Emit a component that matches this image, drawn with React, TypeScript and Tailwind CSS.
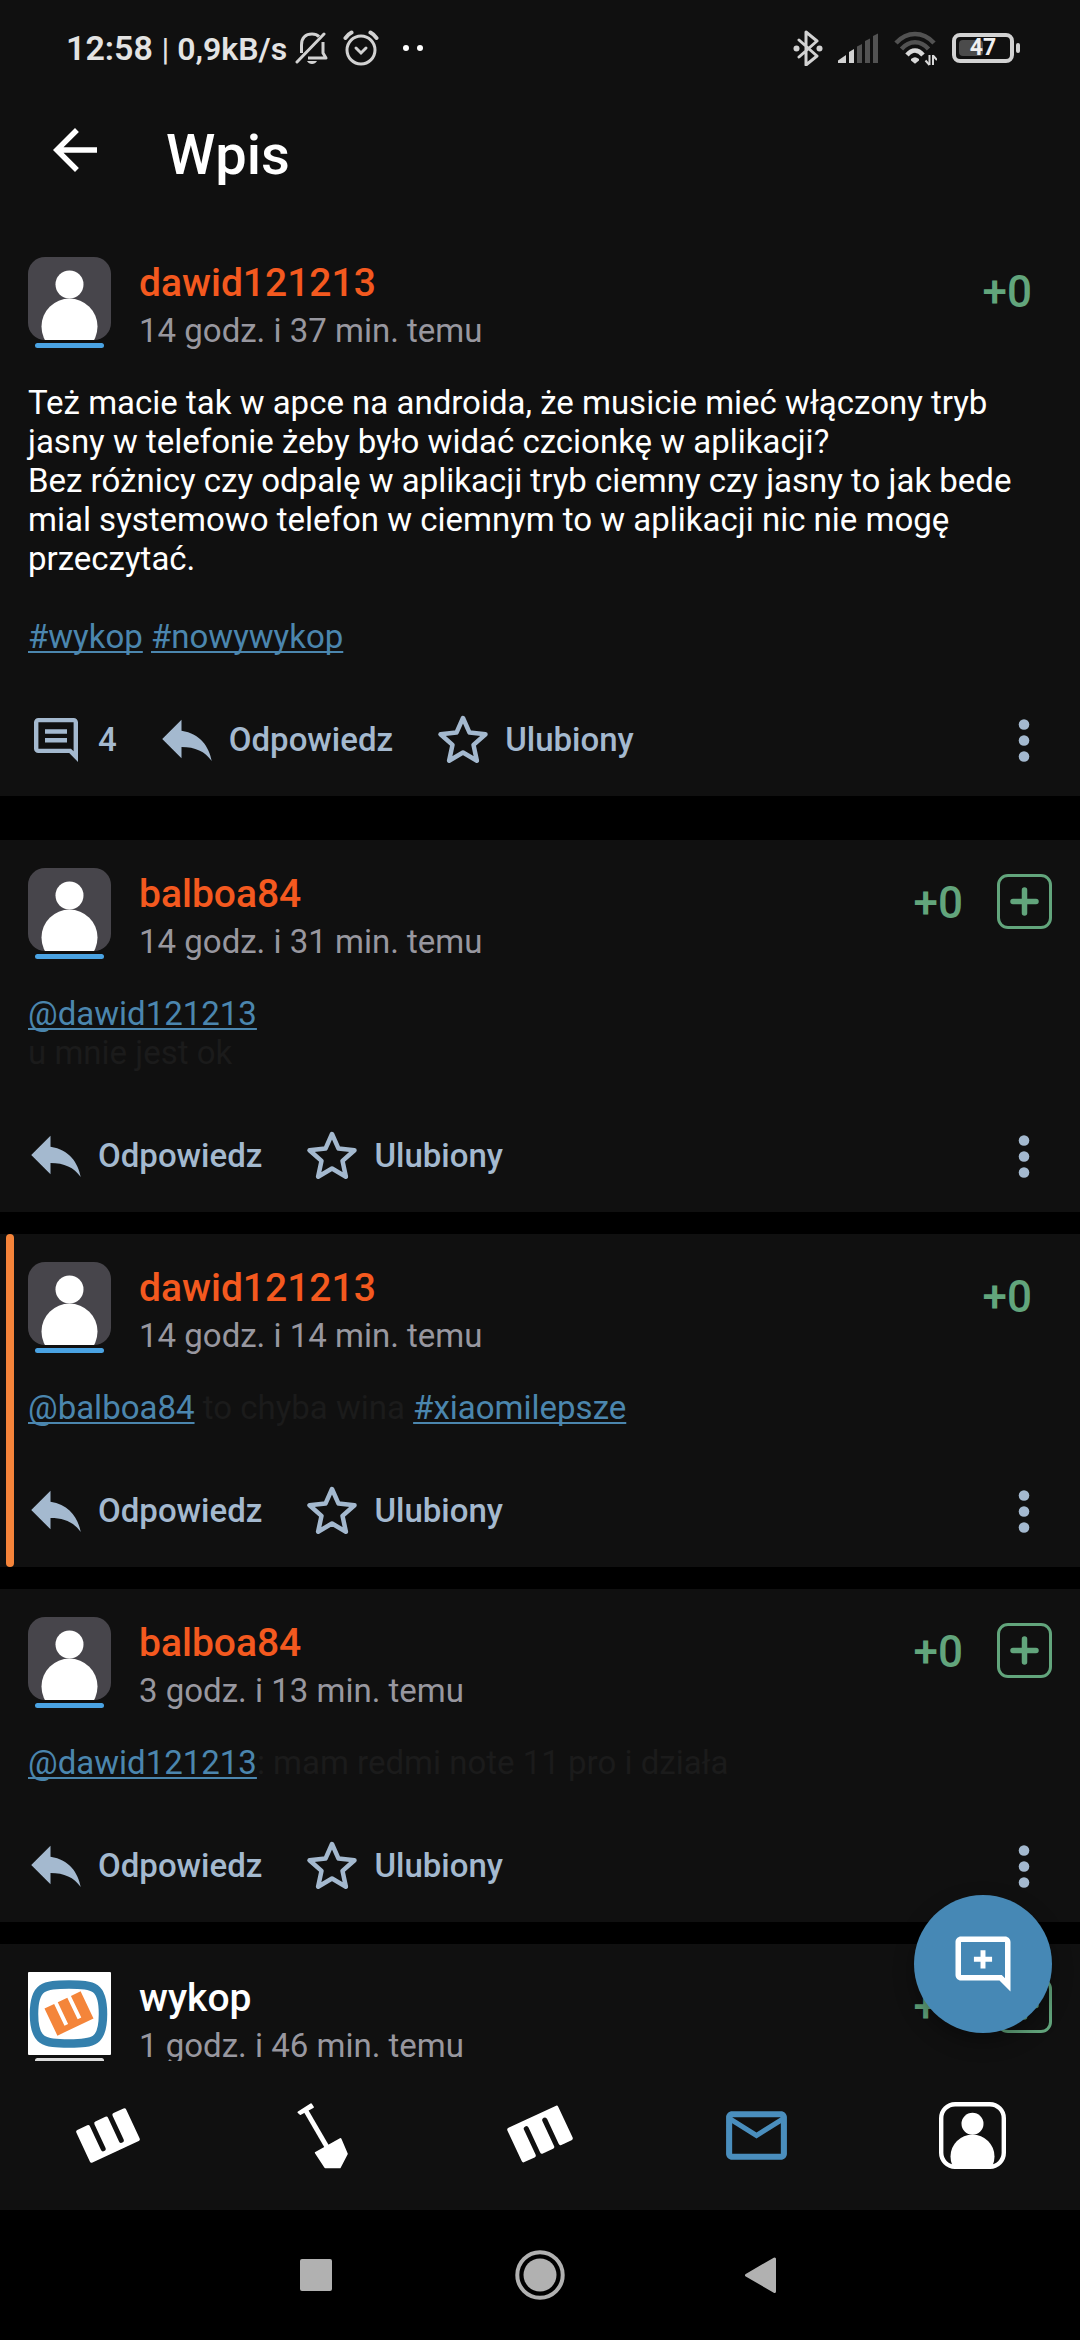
import type { ReactNode } from "react";

type Post = {
  author: string;
  time: string;
  body?: ReactNode;
  official?: boolean;
  highlighted?: boolean;
  canVote?: boolean;
  comments?: number;
};

function Tag({ children }: { children: string }) {
  return (
    <a
      href="#"
      className="text-[#4b86ae] underline decoration-2 underline-offset-[3px] [text-decoration-skip-ink:none]"
    >
      {children}
    </a>
  );
}

function BellOffIcon() {
  return (
    <svg width="34" height="36" viewBox="0 0 34 36" fill="none" stroke="#d2d2d2" strokeWidth="3">
      <path d="M6.5 23V15C6.5 8 10.500 4 17 4c3 0 5.500 1 7 2.600M28 12v11l3 5H13" strokeLinejoin="round" />
      <path d="M2 32 29 4" strokeLinecap="round" />
      <path d="M12 31h10c-1 2-3 3-5 3s-4-1-5-3Z" fill="#d2d2d2" stroke="none" />
    </svg>
  );
}

function AlarmIcon() {
  return (
    <svg width="36" height="36" viewBox="0 0 36 36" fill="none" stroke="#d2d2d2" strokeLinecap="round">
      <circle cx="18" cy="20" r="14" strokeWidth="3" />
      <path d="m13 18 5 5 5-5" strokeWidth="3" />
      <path d="M2.500 8C4 5.500 6 3.800 8.500 2.500M33.500 8C32 5.500 30 3.800 27.500 2.500" strokeWidth="4" />
    </svg>
  );
}

function BluetoothIcon() {
  return (
    <svg width="30" height="36" viewBox="0 0 30 36" fill="#d2d2d2">
      <path
        d="m6 10 18 16-11 9V2l11 9L6 27"
        fill="none"
        stroke="#d2d2d2"
        strokeWidth="3"
        strokeLinejoin="round"
        strokeLinecap="round"
      />
      <circle cx="3.500" cy="18.500" r="3" />
      <circle cx="26.500" cy="18.500" r="3" />
    </svg>
  );
}

function SignalIcon() {
  return (
    <svg width="41" height="30" viewBox="0 0 41 30">
      <path d="M0 30v-2.500L8 22v8Z" fill="#d2d2d2" />
      <path d="M11 30V19l5-3v14Z" fill="#d2d2d2" />
      <path d="M19 30V13.500l5-2.500v19ZM27 30V8l5-2.500V30ZM35 30V3l5-2.500V30Z" fill="#525252" />
    </svg>
  );
}

function WifiIcon() {
  return (
    <svg width="43" height="36" viewBox="0 0 43 36" fill="none" strokeWidth="4.500">
      <path d="M2 13c11-12 27-12 38 0" stroke="#525252" />
      <path d="M7.500 19c8-9 19-9 27 0" stroke="#525252" />
      <path d="M13 25c5-6 11-6 16 0" stroke="#d9d9d9" />
      <path d="M18 29.500q3-2.500 6 0v.5L21 32.500 18 30Z" fill="#d9d9d9" strokeWidth="2" stroke="#d9d9d9" />
      <path d="M35.500 25v10M39 25v10" stroke="#d9d9d9" strokeWidth="2" />
      <path d="m35.500 35-4-4.500M39 25.500l4 4.500" stroke="#d9d9d9" strokeWidth="2" />
    </svg>
  );
}

function Battery({ level }: { level: number }) {
  return (
    <div className="flex items-center gap-0.5">
      <div className="relative flex h-[30px] w-[62px] items-center justify-center rounded-lg border-4 border-[#d2d2d2]">
        <div className="absolute inset-y-[3px] left-[3px] w-6 rounded-sm bg-[#4b4b4b]" />
        <span className="relative text-[23px] leading-6 font-bold text-[#f0f0f0]">{level}</span>
      </div>
      <div className="h-2.5 w-1 rounded-full bg-[#d2d2d2]" />
    </div>
  );
}

function StatusBar() {
  return (
    <div className="flex h-24 items-center justify-between pr-[60px] pl-[66px]">
      <div className="flex items-center gap-3.5">
        <div className="flex items-center gap-2">
          <p className="text-[34px] leading-10 font-semibold text-[#e3e3e3]">
            12:58 <span className="text-[32px]"><span className="font-normal">|</span> 0,9kB/s</span>
          </p>
          <BellOffIcon />
        </div>
        <AlarmIcon />
        <div className="ml-2.5 flex gap-2">
          <div className="size-1.5 rounded-full bg-white" />
          <div className="size-1.5 rounded-full bg-white" />
        </div>
      </div>
      <div className="flex items-center gap-[15px]">
        <BluetoothIcon />
        <SignalIcon />
        <WifiIcon />
        <Battery level={47} />
      </div>
    </div>
  );
}

function UserAvatar() {
  return (
    <svg width="83" height="83" viewBox="0 0 83 83" className="rounded-[17px]">
      <rect width="83" height="83" fill="#47454b" />
      <circle cx="41.500" cy="27.500" r="14" fill="#fff" />
      <circle cx="41.500" cy="69.500" r="28" fill="#fff" />
    </svg>
  );
}

function WykopAvatar() {
  return (
    <svg width="83" height="83" viewBox="0 0 83 83">
      <rect width="83" height="83" rx="1" fill="#fff" />
      <path
        d="M41 12.500C66 12.500 75 14 75 42S66 71.500 41 71.500 6 70 6 42s10-29.500 35-29.500Z"
        fill="none"
        stroke="#3480ad"
        strokeWidth="8.500"
      />
      <path
        transform="translate(41 41.500) rotate(-25.500)"
        d="M-20-15H-9.300V9h4V-15H5.300V9h4V-15H20V15H-20Z"
        fill="#f4853a"
      />
    </svg>
  );
}

function ReplyIcon() {
  return (
    <svg width="66" height="66" viewBox="0 0 24 24" fill="currentColor">
      <path d="M10 9V5l-7 7 7 7v-4.100c5 0 8.500 1.600 11 5.100-1-5-4-10-11-11z" />
    </svg>
  );
}

function StarIcon() {
  return (
    <svg width="66" height="66" viewBox="0 0 66 66" fill="none" stroke="currentColor" strokeWidth="4.500" strokeLinejoin="round">
      <path
        transform="translate(33 35.500)"
        d="M0-23.500 6.500-8.900 22.500-7.300 10.500 3.400 13.900 19.200 0 11-13.900 19.200-10.500 3.400-22.500-7.300-6.500-8.900Z"
      />
    </svg>
  );
}

function CommentIcon() {
  return (
    <svg width="66" height="66" viewBox="-3 -3.400 30 30" fill="currentColor">
      <path d="M22 4c0-1.100-.9-2-2-2H4c-1.100 0-2 .9-2 2v12c0 1.100.9 2 2 2h14l4 4V4zm-2 0v13.170L18.830 16H4V4h16z" />
      <path d="M7 7.200h10v2H7zM7 11.200h10v2H7z" />
    </svg>
  );
}

function DotsIcon() {
  return (
    <svg width="66" height="66" viewBox="0 0 66 66" fill="currentColor">
      <circle cx="33" cy="18.500" r="5.300" />
      <circle cx="33" cy="34.500" r="5.300" />
      <circle cx="33" cy="50.500" r="5.300" />
    </svg>
  );
}

const actionClass = "flex items-center gap-[9px] text-[33px] leading-[39px] font-medium";

function PostCard({ post }: { post: Post }) {
  return (
    <article className="relative bg-[#101010] pt-7 pb-6">
      {post.highlighted && <div className="absolute inset-y-0 left-1.5 w-2 rounded-full bg-[#f5843a]" />}
      <header className="flex items-start gap-7 px-7">
        <div className="flex flex-col items-center gap-[3px]">
          {post.official ? <WykopAvatar /> : <UserAvatar />}
          <div
            className={
              post.official
                ? "h-[5px] w-[69px] rounded-full bg-[#dcdcdc]"
                : "h-[5px] w-[69px] rounded-full bg-[#4aa3e3]"
            }
          />
        </div>
        <div className="grow">
          <h2
            className={
              post.official
                ? "text-[39px] leading-[52px] font-medium text-white"
                : "text-[39px] leading-[52px] font-medium text-[#f4591f]"
            }
          >
            {post.author}
          </h2>
          <p className="text-[33px] leading-[44px] text-[#98979f]">{post.time}</p>
        </div>
        <div className={post.canVote ? "flex items-start gap-[34px] pt-1.5" : "flex items-start pt-1.5 pr-5"}>
          <span className="text-[44px] leading-[58px] font-medium text-[#62a57c]">+0</span>
          {post.canVote && (
            <button
              type="button"
              aria-label="Plusuj"
              className="flex size-[55px] items-center justify-center rounded-[11px] border-[3px] border-[#62a57c]"
            >
              <svg width="29" height="29" viewBox="0 0 29 29" stroke="#62a57c" strokeWidth="5.500" strokeLinecap="round">
                <path d="M14.500 3v23M3 14.500h23" />
              </svg>
            </button>
          )}
        </div>
      </header>
      {post.body && (
        <>
          <div className="mt-[30px] px-7 text-[33px] leading-[39px]">{post.body}</div>
          <footer className="mt-[50px] flex items-center justify-between px-[23px] text-[#a4b9cf]">
            <div className="flex items-center gap-[37px]">
              {post.comments !== undefined && (
                <button type="button" aria-label="Komentarze" className={actionClass}>
                  <CommentIcon />
                  {post.comments}
                </button>
              )}
              <button type="button" className={actionClass}>
                <ReplyIcon />
                Odpowiedz
              </button>
              <button type="button" className={actionClass}>
                <StarIcon />
                Ulubiony
              </button>
            </div>
            <button type="button" aria-label="Więcej">
              <DotsIcon />
            </button>
          </footer>
        </>
      )}
    </article>
  );
}

const mainPost: Post = {
  author: "dawid121213",
  time: "14 godz. i 37 min. temu",
  comments: 4,
  body: (
    <>
      <p className="text-white">
        Też macie tak w apce na androida, że musicie mieć włączony tryb jasny w telefonie żeby było widać czcionkę w
        aplikacji?
        <br />
        Bez różnicy czy odpalę w aplikacji tryb ciemny czy jasny to jak bede mial systemowo telefon w ciemnym to w
        aplikacji nic nie mogę przeczytać.
      </p>
      <p className="mt-[39px]">
        <Tag>#wykop</Tag> <Tag>#nowywykop</Tag>
      </p>
    </>
  ),
};

const replies: Post[] = [
  {
    author: "balboa84",
    time: "14 godz. i 31 min. temu",
    canVote: true,
    body: (
      <p className="text-[#1b1b1b]">
        <Tag>@dawid121213</Tag>
        <br />u mnie jest ok
      </p>
    ),
  },
  {
    author: "dawid121213",
    time: "14 godz. i 14 min. temu",
    highlighted: true,
    body: (
      <p className="text-[#1b1b1b]">
        <Tag>@balboa84</Tag> to chyba wina <Tag>#xiaomilepsze</Tag>
      </p>
    ),
  },
  {
    author: "balboa84",
    time: "3 godz. i 13 min. temu",
    canVote: true,
    body: (
      <p className="text-[#1b1b1b]">
        <Tag>@dawid121213</Tag>: mam redmi note 11 pro i działa
      </p>
    ),
  },
  {
    author: "wykop",
    time: "1 godz. i 46 min. temu",
    canVote: true,
    official: true,
  },
];

function BlocksIcon({ flipped }: { flipped?: boolean }) {
  return (
    <svg width="66" height="66" viewBox="0 0 66 66" fill="#fff" overflow="visible">
      <path
        transform={flipped ? "translate(33 31) rotate(155) scale(1.02 1.05)" : "translate(33 32.500) rotate(-25)"}
        d="M-25.500-18H-14.500q2 0 2 2V10a2.500 2.500 0 0 0 5 0V-16q0-2 2-2H5.500q2 0 2 2V10a2.500 2.500 0 0 0 5 0V-16q0-2 2-2H25.500q2 0 2 2V16q0 2-2 2H-25.500q-2 0-2-2V-16q0-2 2-2Z"
      />
    </svg>
  );
}

function ShovelIcon() {
  return (
    <svg width="66" height="66" viewBox="0 0 66 66" fill="#fff" stroke="#fff" strokeLinejoin="round">
      <path d="M7.500 9.300 20 1.300l1.800 2.800L9.500 11Z" strokeWidth="2" />
      <path d="m14.500 7 21.500 37" strokeWidth="4.800" />
      <path d="M24.800 49.800 49.400 36 55.800 50.800 48.800 64.200H34.300Z" strokeWidth="2" />
    </svg>
  );
}

function MailIcon() {
  return (
    <svg width="73" height="73" viewBox="0 0 24 24" fill="#4a8ebd">
      <path d="M22 6c0-1.100-.9-2-2-2H4c-1.100 0-2 .9-2 2v12c0 1.100.9 2 2 2h16c1.100 0 2-.9 2-2V6zm-2 0-8 5-8-5h16zm0 12H4V8l8 5 8-5v10z" />
    </svg>
  );
}

function ProfileIcon() {
  return (
    <svg width="67" height="67" viewBox="0 0 67 67" fill="#fff">
      <clipPath id="profile-frame">
        <rect width="67" height="67" rx="16" />
      </clipPath>
      <rect x="2.200" y="2.200" width="62.600" height="62.600" rx="14" fill="none" stroke="#fff" strokeWidth="4.400" />
      <g clipPath="url(#profile-frame)">
        <circle cx="33.500" cy="21.700" r="11" />
        <circle cx="33.500" cy="54.500" r="22" />
      </g>
    </svg>
  );
}

function BottomNav() {
  const items = [
    { label: "Wykop", icon: <BlocksIcon /> },
    { label: "Wykopalisko", icon: <ShovelIcon /> },
    { label: "Mikroblog", icon: <BlocksIcon flipped /> },
    { label: "Wiadomości", icon: <MailIcon /> },
    { label: "Profil", icon: <ProfileIcon /> },
  ];
  return (
    <nav className="grid h-[149px] shrink-0 grid-cols-5 bg-[#101010]">
      {items.map((item) => (
        <button key={item.label} type="button" aria-label={item.label} className="flex items-center justify-center">
          {item.icon}
        </button>
      ))}
    </nav>
  );
}

function SystemNav() {
  return (
    <div className="flex h-[130px] shrink-0 items-center justify-center gap-[174px] bg-black text-[#b1b1b1]">
      <button type="button" aria-label="Ostatnie">
        <svg width="50" height="50" viewBox="0 0 50 50" fill="currentColor">
          <rect x="9" y="9" width="32" height="32" rx="2" />
        </svg>
      </button>
      <button type="button" aria-label="Ekran główny">
        <svg width="50" height="50" viewBox="0 0 50 50" fill="currentColor">
          <circle cx="25" cy="25" r="22.700" fill="none" stroke="currentColor" strokeWidth="4" />
          <circle cx="25" cy="25" r="16.500" />
        </svg>
      </button>
      <button type="button" aria-label="Wstecz">
        <svg width="50" height="50" viewBox="0 0 50 50" fill="currentColor" stroke="currentColor" strokeWidth="3" strokeLinejoin="round">
          <path d="M35.500 9v32.500L7.500 25.200Z" />
        </svg>
      </button>
    </div>
  );
}

export default function App() {
  return (
    <div className="flex h-dvh flex-col overflow-hidden bg-black font-['Roboto',sans-serif]">
      <div className="shrink-0 bg-[#101010]">
        <StatusBar />
        <header className="flex items-start gap-[58px] px-[42px] pt-[21px] pb-9">
          <button type="button" aria-label="Wróć">
            <svg width="66" height="66" viewBox="0 0 24 24" fill="#fff">
              <path d="M20 11H7.830l5.590-5.590L12 4l-8 8 8 8 1.410-1.410L7.830 13H20v-2z" />
            </svg>
          </button>
          <h1 className="text-[56px] leading-[76px] font-medium text-white">Wpis</h1>
        </header>
      </div>
      <div className="relative min-h-0 grow">
        <main className="h-full overflow-hidden">
          <PostCard post={mainPost} />
          <section className="mt-11 flex flex-col gap-[22px]">
            {replies.map((post) => (
              <PostCard key={post.time} post={post} />
            ))}
          </section>
        </main>
        <button
          type="button"
          aria-label="Dodaj komentarz"
          className="absolute right-7 bottom-7 flex size-[138px] items-center justify-center rounded-full bg-[#4688b5] shadow-[0_8px_20px_rgba(0,0,0,0.35)]"
        >
          <svg width="66" height="66" viewBox="0 0 24 24" fill="#fff">
            <path d="M22 4c0-1.100-.9-2-2-2H4c-1.100 0-2 .9-2 2v12c0 1.100.9 2 2 2h14l4 4V4zm-2 0v13.170L18.830 16H4V4h16z" />
            <path d="M11.100 7h1.800v2.400h2.400v1.800h-2.400v2.400h-1.800v-2.400H8.700V9.400h2.400Z" />
          </svg>
        </button>
      </div>
      <BottomNav />
      <SystemNav />
    </div>
  );
}
